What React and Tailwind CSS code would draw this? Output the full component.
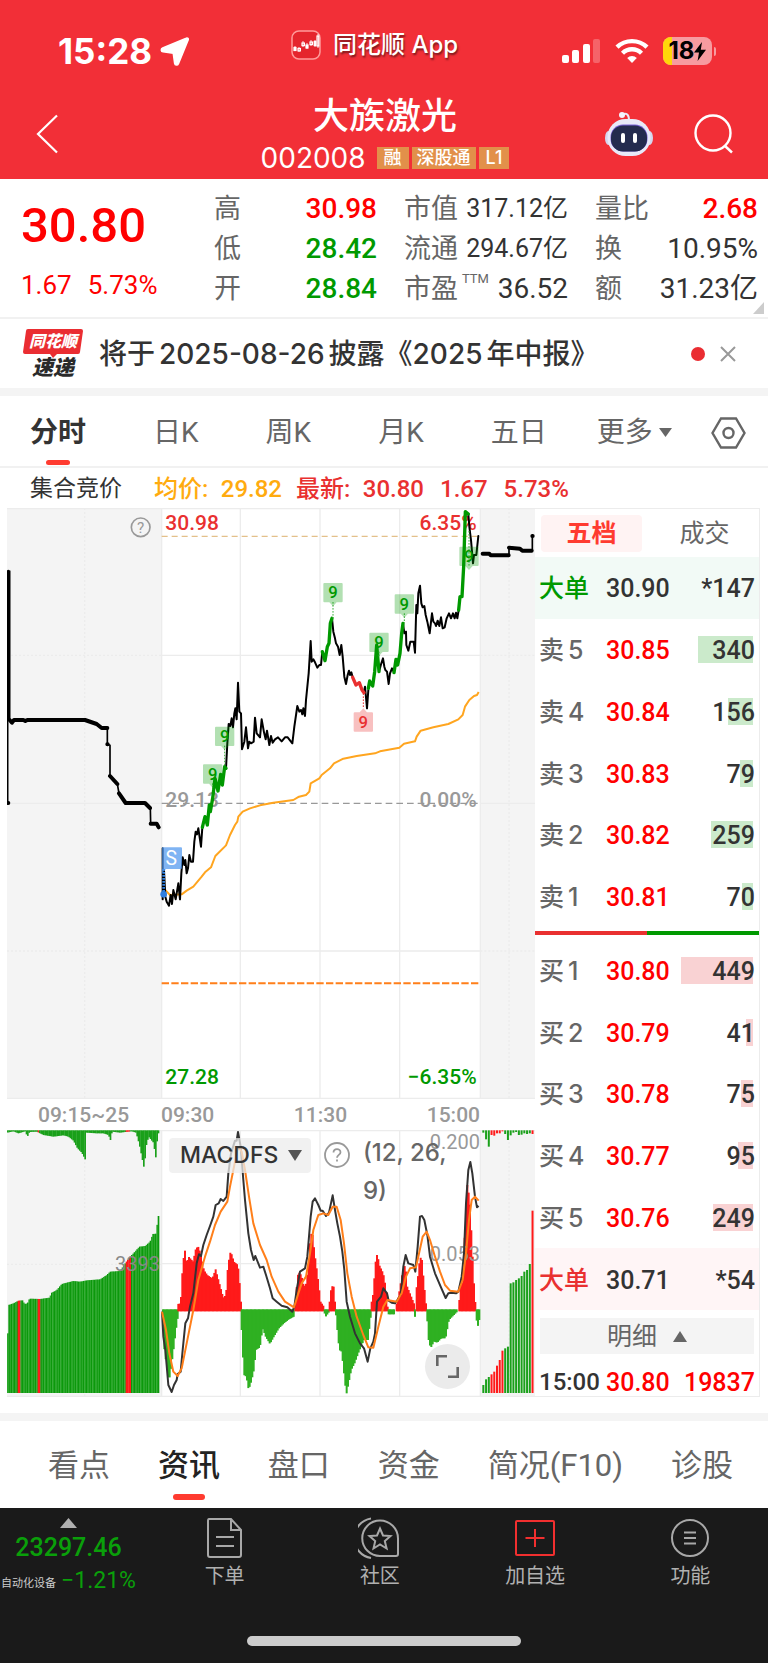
import React from "react";

const NUM = "font-['Roboto','Noto_Sans_CJK_SC',sans-serif]";
const UI = "font-['Inter','Noto_Sans_CJK_SC',sans-serif]";

const QUOTES = [
  [
    { label: "高", value: "30.98", color: "text-[#ff0000] font-medium" },
    { label: "低", value: "28.42", color: "text-[#009900] font-medium" },
    { label: "开", value: "28.84", color: "text-[#009900] font-medium" },
  ],
  [
    { label: "市值", value: "317.12亿", color: "text-[#333]", small: true },
    { label: "流通", value: "294.67亿", color: "text-[#333]", small: true },
    { label: "市盈", sup: "TTM", value: "36.52", color: "text-[#333]" },
  ],
  [
    { label: "量比", value: "2.68", color: "text-[#ff0000] font-medium" },
    { label: "换", value: "10.95%", color: "text-[#333]" },
    { label: "额", value: "31.23亿", color: "text-[#333]" },
  ],
];

const ASKS = [
  ["5", "30.85", 340],
  ["4", "30.84", 156],
  ["3", "30.83", 79],
  ["2", "30.82", 259],
  ["1", "30.81", 70],
];

const BIDS = [
  ["1", "30.80", 449],
  ["2", "30.79", 41],
  ["3", "30.78", 75],
  ["4", "30.77", 95],
  ["5", "30.76", 249],
];

// price line, split where the nine-turn signal recolours it
const PRICE = [
  ["#000", "38,1045 38,1198 42,1110 46,1190 50,1205 57,1217 62,1185 66,1212 70,1170 77,1198 85,1150 90,1198 94,1120 98,1072 103,1095 106,1080 110,1120 114,1105 118,1065 123,1085 129,1085 133,1025 137,995 141,1003 145,985 153,1040 157,982"],
  ["#000", "228,805 232,730 236,672 241,678 245,655 249,682 253,640 256,625 260,658 264,548 268,635 273,640 276,748 283,725 288,682 294,745 298,725 303,730 311,725 315,653 320,700 330,712 335,658 342,697 347,718 351,692 358,735 363,708 368,728 375,718 384,712 395,724 405,712 413,712 427,730 433,680 442,618 448,635 453,630 457,643 460,625 465,648 468,600 476,520 482,423 485,485 490,478 495,487 502,503 508,495 513,495 517,455"],
  ["#000", "546,355 550,395 555,415 558,430 564,440 569,465 574,435 578,470 583,530 588,552 593,525 597,512 600,525 604,517 608,532"],
  ["#000", "642,575 645,560 651,625 655,570"],
  ["#000", "687,515 694,490 699,475 703,500 706,510 711,515 716,552 720,520 726,505 732,518"],
  ["#000", "759,370 763,400 768,395 769,435 775,452 781,425 791,425 795,458 799,315 802,340 805,280 810,257 814,310 818,322 823,318 827,345 832,365 839,400 846,340 850,365 855,370 858,378 863,362 868,378 873,352 878,385 884,382 890,355 897,340 903,355 909,340 914,355 918,338 922,355 926,330"],
  ["#000", "955,42 958,80 963,120 969,190 972,165 979,165 985,108"],
  ["#009900", "157,982 165,950 172,975 178,915 181,935 188,895 195,835 204,873 212,823 217,855 224,800 228,805"],
  ["#009900", "517,455 525,482 532,440 537,430 541,370 546,355"],
  ["#009900", "655,565 659,543 668,558 674,515 680,435 687,515"],
  ["#009900", "732,518 738,478 743,495 750,460 755,400 759,370"],
  ["#009900", "926,330 930,290 936,290 941,200 946,35 955,42"],
  ["#e93030", "608,532 618,555 628,548 636,570 642,578"],
];

const AVERAGE =
  "44,1168 60,1185 95,1183 110,1172 130,1160 155,1130 165,1117 183,1102 196,1068 228,1036 240,1005 255,975 262,965 265,950 278,935 300,925 330,916 370,908 430,900 447,890 468,885 478,875 482,850 508,835 515,825 540,805 552,790 580,776 620,768 675,760 690,754 748,743 762,731 795,724 800,710 812,692 850,682 895,672 925,658 938,645 945,620 958,600 972,588 981,585 986,576";

const MARKERS = [
  [159, 793, 870],
  [195, 680, 800],
  [520, 249, 355],
  [658, 398, 470],
  [734, 283, 370],
  [928, 140, 90],
];

const DIF =
  "36,575 40,650 46,690 55,795 65,816 72,795 80,780 83,762 92,755 98,690 106,610 114,595 120,560 130,520 140,430 147,403 153,408 160,375 170,345 180,318 190,290 197,255 206,250 212,237 220,243 230,230 235,160 243,100 255,62 260,62 264,36 272,80 280,180 285,240 295,340 303,390 311,420 316,408 330,443 340,440 348,465 360,505 368,535 380,545 395,557 412,562 427,575 433,560 440,510 450,455 465,445 472,410 482,290 488,245 495,235 505,255 512,272 518,272 528,288 537,278 548,226 555,270 562,310 570,350 577,395 583,450 590,545 600,590 615,640 630,670 642,685 653,725 661,685 670,665 675,640 681,545 693,530 700,505 711,520 716,542 725,548 735,550 742,540 752,525 760,440 767,405 775,430 790,435 796,455 803,380 810,290 816,288 823,300 832,345 840,410 855,460 872,500 887,534 895,520 905,518 918,520 925,515 935,470 942,400 948,250 955,150 961,126 967,160 975,230 981,262 986,258";

const DEA =
  "36,575 48,630 58,700 70,755 83,768 95,745 110,670 130,570 145,480 165,410 180,365 195,315 212,275 232,245 240,200 250,150 262,90 268,84 275,95 285,150 297,230 310,310 330,375 350,420 365,470 385,515 405,545 432,562 445,520 455,490 468,470 480,400 490,330 505,285 520,280 535,285 548,260 560,260 572,300 582,370 592,460 605,530 620,590 640,645 655,682 670,683 685,620 700,560 712,540 740,545 755,520 768,470 780,445 798,442 806,405 818,350 830,335 840,360 855,410 870,455 885,495 900,512 925,515 938,480 948,400 957,300 965,240 975,230 986,242";

const HIST = [
  [[36, 575], [40, 680], [48, 740], [55, 785], [62, 740], [70, 680], [76, 630], [82, 590]],
  [[82, 552], [90, 550], [92, 512], [97, 425], [103, 392], [108, 430], [114, 410], [128, 425], [134, 390], [142, 378], [150, 400], [160, 450], [170, 465], [185, 475], [195, 448], [205, 485], [218, 533], [226, 525], [232, 435], [240, 393], [250, 425], [262, 435], [268, 500], [271, 545]],
  [[272, 600], [274, 660], [280, 765], [287, 770], [294, 810], [302, 785], [310, 750], [316, 690], [328, 682], [336, 625], [345, 650], [358, 672], [370, 650], [385, 625], [400, 610], [415, 598], [430, 590]],
  [[433, 560], [436, 520], [443, 455], [452, 465], [460, 500], [467, 490], [474, 430], [480, 340], [486, 345], [492, 400], [500, 460], [510, 545], [520, 560]],
  [[521, 575], [524, 592], [534, 578]],
  [[536, 560], [538, 530], [543, 498], [549, 500], [553, 545]],
  [[555, 575], [560, 630], [566, 690], [573, 695], [580, 760], [587, 825], [594, 790], [602, 750], [612, 730], [625, 695], [640, 660], [652, 660], [658, 610], [661, 585]],
  [[662, 550], [668, 520], [674, 430], [680, 400], [686, 435], [698, 460], [706, 505], [711, 560]],
  [[713, 583], [730, 583]],
  [[737, 555], [745, 520], [755, 460], [764, 432], [770, 500], [780, 525], [792, 555]],
  [[792, 590], [796, 592]],
  [[797, 510], [803, 460], [808, 410], [814, 420], [820, 490], [826, 550]],
  [[829, 590], [834, 660], [840, 685], [850, 665], [860, 668], [872, 655], [885, 655], [895, 600], [912, 583], [920, 575]],
  [[925, 550], [930, 500], [937, 480], [941, 390], [944, 280], [950, 195], [957, 235], [963, 350], [970, 490], [975, 560]],
  [[977, 595], [981, 622], [986, 600]],
];

const AUCTION_VOL = [[21, 640], [23, 640], [25, 555], [40, 550], [55, 542], [68, 541], [73, 552], [82, 550], [88, 536], [120, 537], [148, 533], [155, 518], [170, 510], [185, 492], [200, 488], [220, 483], [240, 485], [260, 481], [300, 478], [320, 465], [330, 455], [360, 453], [375, 430], [390, 410], [400, 400], [418, 380], [435, 378], [450, 365], [458, 342], [469, 341], [473, 288], [478, 288]];
const AUCTION_TOP = [[21, 38], [40, 34], [55, 40], [75, 34], [82, 50], [88, 36], [110, 35], [130, 45], [160, 50], [190, 46], [205, 50], [220, 62], [232, 85], [245, 98], [255, 118], [259, 38], [290, 40], [310, 40], [325, 45], [331, 60], [336, 35], [360, 38], [375, 36], [395, 34], [408, 38], [418, 75], [432, 145], [440, 65], [447, 52], [460, 68], [467, 112], [473, 40], [478, 40]];
const CLOSE_VOL = [795, 778, 771, 763, 755, 737, 720, 692, 685, 680, 490, 487, 480, 475, 468, 455, 450, 432, 272];
const CLOSE_TOP = [38, 58, 80, 45, 47, 40, 40, 34, 42, 60, 46, 38, 36, 45, 44, 40, 42, 40, 42];
const CLOSE_RED = [3, 4, 5, 6, 7, 18];

function sample(points, x) {
  for (let i = 1; i < points.length; i++) {
    const [x0, y0] = points[i - 1];
    const [x1, y1] = points[i];
    if (x <= x1) return y0 + ((y1 - y0) * (x - x0)) / (x1 - x0);
  }
  return points[points.length - 1][1];
}

function range(from, to, step) {
  const out = [];
  for (let x = from; x < to; x += step) out.push(x);
  return out;
}

function StatusBar() {
  return (
    <div className="flex items-start h-[88px] pt-[30px] pl-[58px] pr-[52px]">
      <div className="flex items-center gap-2 w-[233px] pt-[3px]">
        <span className="text-[35px] leading-[36px] font-bold">15:28</span>
        <svg width="29" height="29" viewBox="0 0 29 29" fill="#fff">
          <path d="M26.3 1.2c1.3-.6 2.4.5 1.8 1.8L18.400 26.600c-.8 2-3.400 1.800-3.700-.3l-1.400-10L3.100 14.800c-2.200-.3-2.400-2.900-.4-3.700Z" stroke="#fff" strokeWidth="1.600" strokeLinejoin="round" />
        </svg>
      </div>
      <div className="flex items-center gap-3">
        <svg width="30" height="30" viewBox="0 0 30 30">
          <rect x="1" y="1" width="28" height="28" rx="7" fill="#e5252d" stroke="#ff9a9a" strokeWidth="1.500" />
          <g stroke="#fff" strokeWidth="1.200" fill="none">
            <path d="M4 16v5M8 17v5M12 11v6M16 13v6M20 10v6M24 10v7M27 4v14" opacity=".7" />
            <rect x="3" y="17.500" width="2" height="3" fill="#fff" />
            <rect x="7" y="18.500" width="2.400" height="2.400" />
            <rect x="11" y="13" width="2.400" height="2.600" />
            <rect x="15" y="15" width="2" height="3" fill="#fff" />
            <rect x="19" y="12" width="2.400" height="2.600" />
            <rect x="23.200" y="11.500" width="1.600" height="4" fill="#fff" />
            <rect x="26" y="6" width="1.800" height="10" />
          </g>
        </svg>
        <span className="text-[24px] leading-[30px] font-medium [text-shadow:1px_2px_2px_rgba(0,0,0,0.5)]">同花顺 App</span>
      </div>
      <div className="flex items-center ml-auto pt-[7px]">
        <svg className="mr-[14px]" width="40" height="26" viewBox="0 0 40 26" fill="#fff">
          <rect x="1" y="17" width="7" height="8" rx="2" />
          <rect x="11" y="12" width="7" height="13" rx="2" />
          <rect x="22" y="6" width="7" height="19" rx="2" />
          <rect x="32" y="1" width="7" height="24" rx="2" opacity=".25" />
        </svg>
        <svg className="mr-[14px]" width="34" height="26" viewBox="0 0 34 26" fill="none" stroke="#fff" strokeWidth="4.400">
          <path d="M2 9.200a21.500 21.500 0 0 1 30 0" />
          <path d="M7.500 15.200a13.500 13.500 0 0 1 19 0" />
          <path d="M17 25l-4.800-5a6.800 6.800 0 0 1 9.600 0Z" fill="#fff" stroke="none" />
        </svg>
        <div className="flex items-center gap-0.5">
          <div className="relative flex items-center justify-center w-[49px] h-7 rounded-lg overflow-hidden bg-[#f79ba0] text-black">
            <span className="absolute left-0 top-0 h-full w-[9px] bg-[#ffd60a]"></span>
            <span className="relative text-[24px] leading-7 font-bold">18</span>
            <svg className="relative" width="12" height="19" viewBox="0 0 12 19">
              <path d="M8 0 0 10.500h5L3.600 19 12 7.800H6.800Z" />
            </svg>
          </div>
          <span className="w-[2px] h-[9px] rounded-r bg-[#f79ba0]"></span>
        </div>
      </div>
    </div>
  );
}

function Robot() {
  return (
    <svg width="50" height="46" viewBox="0 0 50 46">
      <path d="M18 3.500q7-3 7 6" fill="none" stroke="#e9e9f7" strokeWidth="2" />
      <circle cx="18" cy="4" r="3" fill="#f4f4ff" />
      <ellipse cx="4.500" cy="27" rx="3.500" ry="7" fill="#d5d6ee" />
      <ellipse cx="45.500" cy="27" rx="3.500" ry="7" fill="#d5d6ee" />
      <rect x="3.500" y="8" width="43" height="37" rx="18" fill="#e8e9f8" />
      <rect x="6.500" y="13.500" width="37" height="27" rx="12.500" fill="#7b62d8" />
      <rect x="7" y="14.500" width="36" height="26" rx="12" fill="#242b4e" />
      <rect x="17" y="22" width="4" height="10" rx="2" fill="#fff" />
      <rect x="29" y="22" width="4" height="10" rx="2" fill="#fff" />
    </svg>
  );
}

function Header() {
  return (
    <header className={`${UI} bg-[#f22f37] text-white`}>
      <StatusBar />
      <div className="grid grid-cols-[1fr_auto_1fr] items-center h-[91px] pl-[36px] pr-[34px]">
        <button aria-label="返回" className="justify-self-start">
          <svg width="22" height="40" viewBox="0 0 22 40" fill="none" stroke="#fff" strokeWidth="2.200">
            <path d="M21 1.500 2 20l19 18.500" />
          </svg>
        </button>
        <div className="flex flex-col items-center">
          <h1 className="text-[36px] leading-[48px] font-medium">大族激光</h1>
          <div className="flex items-center gap-[3px]">
            <span className="text-[28px] leading-[36px] mr-2">002008</span>
            <span className="bg-[#e2904a] px-[7px] text-[18px] leading-[22px] font-medium">融</span>
            <span className="bg-[#e2904a] px-[5px] text-[18px] leading-[22px] font-medium">深股通</span>
            <span className="bg-[#e2904a] px-[7px] text-[18px] leading-[22px] font-medium">L1</span>
          </div>
        </div>
        <div className="flex items-center gap-[40px] justify-self-end">
          <button aria-label="智能助手">
            <Robot />
          </button>
          <button aria-label="搜索">
            <svg width="40" height="40" viewBox="0 0 40 40" fill="none" stroke="#fff" strokeWidth="2.400">
              <circle cx="19" cy="19" r="17.500" />
              <path d="m31 32 7 6.500" />
            </svg>
          </button>
        </div>
      </div>
    </header>
  );
}

function Quote() {
  return (
    <section className={`${NUM} relative flex h-[140px] pl-[21px] pr-[10px] pt-2.5 border-b-2 border-[#f1f1f1]`}>
      <div className="w-[193px] text-[#ff0000]">
        <div className="text-[49px] leading-[74px] font-medium">30.80</div>
        <div className="flex gap-4 text-[26px] leading-[44px]">
          <span>1.67</span>
          <span>5.73%</span>
        </div>
      </div>
      <div className="grid grid-cols-[163fr_164fr_163fr] gap-x-[27px] flex-1">
        {QUOTES.map((col, i) => (
          <dl key={i}>
            {col.map((q) => (
              <div key={q.label} className="flex items-center justify-between h-10">
                <dt className="flex text-[27px] leading-10 text-[#666] whitespace-nowrap">
                  {q.label}
                  {q.sup && <sup className="top-0 text-[13px] leading-[20px] ml-1">{q.sup}</sup>}
                </dt>
                <dd className={`${q.color} ${q.small ? "text-[25px]" : "text-[28px]"} leading-10 whitespace-nowrap`}>
                  {q.value}
                </dd>
              </div>
            ))}
          </dl>
        ))}
      </div>
      <svg className="absolute right-1 bottom-[3px]" width="11" height="12" viewBox="0 0 11 12">
        <path d="M11 0v12H0Z" fill="#ccc" />
      </svg>
    </section>
  );
}

function News() {
  return (
    <section className={`${UI} flex items-center h-[77px] pl-[23px] pr-[32px] border-b-8 border-[#f4f4f4]`}>
      <div className="relative flex flex-col items-center w-[60px] italic font-black">
        <svg className="absolute left-0 top-0" width="60" height="30" viewBox="0 0 60 30">
          <path d="M5 1h53q2 0 2 2l-3 21q0 2-2 2H34l-4 4-3-4H2q-2 0-2-2L3 3q0-2 2-2Z" fill="#ea2d32" />
        </svg>
        <span className="relative text-[16px] leading-[27px] text-white">同花顺</span>
        <span className="text-[21px] leading-[25px] text-[#2a2a2a]">速递</span>
      </div>
      <p className="ml-4 text-[28px] leading-[36px] font-medium text-[#333] whitespace-nowrap">
        将于<span className="mx-1">2025-08-26</span>披露《2025<span className="ml-1">年中报》</span>
      </p>
      <span className="ml-auto w-3.5 h-3.5 rounded-full bg-[#ea2d32]"></span>
      <button aria-label="关闭" className="ml-[15px]">
        <svg width="16" height="16" viewBox="0 0 16 16" stroke="#999" strokeWidth="2">
          <path d="m1 1 14 14M15 1 1 15" />
        </svg>
      </button>
    </section>
  );
}

function ChartTabs() {
  return (
    <nav className={`${NUM} flex items-center h-[72px] pt-[3px] pl-[30px] pr-[22px] border-b-2 border-[#f1f1f1] text-[28px] leading-[36px] text-[#666]`}>
      <div className="flex gap-[67px]">
        <button className="relative font-bold text-[#333]">
          分时
          <span className="absolute left-4 -bottom-[14px] w-6 h-[5px] rounded-full bg-[#ff3b30]"></span>
        </button>
        <button>日K</button>
        <button>周K</button>
        <button>月K</button>
        <button>五日</button>
      </div>
      <button className="flex items-center gap-1.5 ml-[50px]">
        更多
        <svg width="13" height="9" viewBox="0 0 13 9">
          <path d="M0 0h13L6.500 9Z" fill="#666" />
        </svg>
      </button>
      <button aria-label="设置" className="ml-auto">
        <svg width="35" height="32" viewBox="0 0 35 32" fill="none" stroke="#666" strokeWidth="2.400">
          <path d="M10 1.500h15L33.500 16 25 30.500H10L1.500 16Z" />
          <circle cx="17.500" cy="16" r="5" />
        </svg>
      </button>
    </nav>
  );
}

function Legend() {
  return (
    <div className={`${NUM} flex items-center h-[40px] pl-[30px] pt-0.5 text-[24px] leading-[36px] font-medium whitespace-nowrap`}>
      <span className="w-[124px] text-[23px] font-normal text-[#333]">集合竞价</span>
      <span className="flex justify-between w-[128px] mr-3.5 text-[#ffab0f]">
        <span>均价:</span>
        <span>29.82</span>
      </span>
      <span className="flex justify-between w-[128px] text-[#e93030]">
        <span>最新:</span>
        <span>30.80</span>
      </span>
      <span className="ml-4 text-[#e93030]">1.67</span>
      <span className="ml-4 text-[#e93030]">5.73%</span>
    </div>
  );
}

function Marker({ x, y, to }) {
  return (
    <g>
      <path d={`M${x + 29} ${y + 57}V${to}`} stroke="#3fb03f" strokeWidth="3" strokeDasharray="5 4" />
      <path
        d={`M${x + 3} ${y}h52q3 0 3 3v52q0 3-3 3h-15l-11 12-11-12h-15q-3 0-3-3v-52q0-3 3-3Z`}
        fill="#009900"
        fillOpacity=".3"
      />
      <text x={x + 29} y={y + 46} textAnchor="middle" fontSize="50" fontWeight="500" fill="#009900">9</text>
    </g>
  );
}

function PriceChart() {
  return (
    <svg className={`${NUM} block w-full`} viewBox="-429 24 1584 1773" role="img" aria-label="分时走势">
      <rect x="-429" y="24" width="464" height="1773" fill="#f4f4f4" />
      <rect x="991" y="24" width="164" height="1773" fill="#f4f4f4" />
      <g stroke="#ececec" strokeWidth="4">
        <path d="M-429 26H1155M-429 1795H1155M35 24V1797M271 24V1797M510 24V1797M749 24V1797M991 24V1797M35 466H991M35 1353H991" />
        <path d="M-196 24V1797M1077 24V1797M-429 466H35M-429 1353H35M991 466H1155M991 1353H1155" strokeDasharray="6 6" />
        <path d="M-429 910H35M991 910H1155" />
      </g>
      <path d="M35 109H991" stroke="#e3c08a" strokeWidth="4" strokeDasharray="18 12" />
      <path d="M35 910H991" stroke="#999" strokeWidth="4" strokeDasharray="20 12" />
      <path d="M35 1450H985" stroke="#ff7f1a" strokeWidth="6" strokeDasharray="22 7" />

      <g fontSize="63" fontWeight="500">
        <text x="46" y="90" fill="#e93030">30.98</text>
        <text x="980" y="90" textAnchor="end" fill="#e93030">6.35%</text>
        <text x="46" y="1752" fill="#009900">27.28</text>
        <text x="980" y="1752" textAnchor="end" fill="#009900">−6.35%</text>
        <text x="46" y="921" fill="#999">29.13</text>
        <text x="980" y="921" textAnchor="end" fill="#999">0.00%</text>
      </g>

      <circle cx="-28" cy="82" r="28" fill="none" stroke="#999" strokeWidth="5" />
      <text x="-28" y="98" textAnchor="middle" fontSize="46" fill="#999">?</text>

      <g fill="none" stroke="#000" strokeLinecap="round" strokeLinejoin="round">
        <g transform="translate(-450 0)">
          <path d="M23 213V910M29 213V658M322 684V733L330 736V828M352 852L357 880M451 925L452 971" strokeWidth="5" />
          <path d="M25 212V655" strokeWidth="6" />
          <path d="M29 660 36 668 42 660H70L76 663 82 660H255L290 672 305 684H322M322 733h1M330 828 352 852M357 880 377 909H435L450 924M452 971H470L476 982M24 909h1" strokeWidth="12" />
        </g>
        <path d="M1077 166V143M1147 152V108" strokeWidth="5" />
        <path d="M998 161H1018L1022 166H1076M1077 143 1110 146 1117 152H1145M1147 108h1" strokeWidth="12" />
      </g>

      <polyline points={AVERAGE} fill="none" stroke="#ffa51f" strokeWidth="6" strokeLinejoin="round" />
      {PRICE.map(([color, points]) => (
        <polyline
          key={points}
          points={points}
          fill="none"
          stroke={color}
          strokeWidth={color === "#000" ? 6 : 10}
          strokeLinejoin="round"
          strokeLinecap="round"
        />
      ))}
      {MARKERS.map(([x, y, to]) => (
        <Marker key={x} x={x} y={y} to={to} />
      ))}

      <path d="M640 580V625" stroke="#e93030" strokeWidth="3" strokeDasharray="5 4" />
      <path d="M614 637h15l11-12 11 12h15q3 0 3 3v52q0 3-3 3h-52q-3 0-3-3v-52q0-3 3-3Z" fill="#e93030" fillOpacity=".3" />
      <text x="640" y="684" textAnchor="middle" fontSize="50" fontWeight="500" fill="#e93030">9</text>

      <path d="M41 1107V1183" stroke="#2f7fe0" strokeWidth="8" strokeDasharray="5 4" />
      <circle cx="41" cy="1183" r="10" fill="#2f7fe0" />
      <path d="M36 1042h57q3 0 3 3v59q0 3-3 3H48l-12 12Z" fill="#4a94ee" fillOpacity=".7" />
      <text x="64" y="1096" textAnchor="middle" fontSize="58" fill="#fff">S</text>
    </svg>
  );
}

function MacdChart() {
  return (
    <svg className={`${NUM} block w-full`} viewBox="-429 30 1584 801" role="img" aria-label="MACDFS">
      <rect x="-429" y="30" width="464" height="801" fill="#f4f4f4" />
      <rect x="991" y="30" width="164" height="801" fill="#f4f4f4" />
      <g stroke="#ececec" strokeWidth="4">
        <path d="M-429 32H1155M-429 829H1155M35 30V831M271 30V831M510 30V831M749 30V831M991 30V831M35 431H991" />
        <path d="M-196 30V831M1077 30V831M-429 433H35M991 433H1155" strokeDasharray="6 6" />
      </g>

      <g transform="translate(-450 0)">
        {range(21, 474, 4).map((x, i) => {
          const red = [53, 57, 113, 117, 377, 381, 385, 389].includes(x);
          const tipRed = [113, 377, 381, 385].includes(x);
          const top = sample(AUCTION_VOL, x + 2);
          return (
            <g key={x}>
              <rect x={x} y={top} width="5" height={819 - top} fill={red ? "#ff1a1a" : i % 2 ? "#0c980c" : "#2ba92b"} />
              <rect x={x} y="31" width="5" height={sample(AUCTION_TOP, x + 2) - 31} fill={tipRed ? "#ff1a1a" : "#1aa01a"} />
            </g>
          );
        })}
      </g>
      {CLOSE_VOL.map((top, i) => (
        <g key={i} fill={CLOSE_RED.includes(i) ? "#ff1a1a" : "#1aa01a"}>
          <rect x={997 + i * 8.2} y={top} width="6" height={819 - top} />
          <rect x={997 + i * 8.2} y="31" width="6" height={CLOSE_TOP[i] - 31} />
        </g>
      ))}

      <g fontSize="60" fill="#999">
        <text x="30" y="454" textAnchor="end" fill="#888">3393</text>
        <text x="990" y="88" textAnchor="end">0.200</text>
      </g>

      {HIST.map((run, r) =>
        range(run[0][0], run[run.length - 1][0], 4).map((x) => {
          const y = sample(run, x + 1);
          const up = y < 571;
          return (
            <rect
              key={`${r}-${x}`}
              x={x}
              y={up ? y : 568}
              width="6"
              height={up ? 574 - y : y - 568}
              fill={up ? "#ff1a1a" : "#2fb022"}
            />
          );
        })
      )}
      <text x="990" y="424" textAnchor="end" fontSize="60" fill="#999">0.053</text>
      <polyline points={DIF} fill="none" stroke="#333" strokeWidth="6" strokeLinejoin="round" />
      <polyline points={DEA} fill="none" stroke="#ff7f1a" strokeWidth="6" strokeLinejoin="round" />
    </svg>
  );
}

function ChartPanel() {
  return (
    <div className="flex-1 min-w-0">
      <PriceChart />
      <div className={`${NUM} grid grid-cols-[154fr_319fr_55fr] h-[31px] text-[21px] leading-[32px] font-medium text-[#999]`}>
        <span className="pl-[31px]">09:15~25</span>
        <div className="flex justify-between">
          <span>09:30</span>
          <span>11:30</span>
          <span>15:00</span>
        </div>
      </div>
      <div className={`${UI} relative`}>
        <MacdChart />
        <div className="absolute left-[162px] top-2 flex items-start">
          <button className="flex items-center gap-2.5 h-[35px] w-[142px] pl-[11px] rounded bg-[#ececec]/75 text-[23px] font-medium text-[#333]">
            MACDFS
            <svg width="14" height="11" viewBox="0 0 14 11">
              <path d="M0 0h14L7 11Z" fill="#555" />
            </svg>
          </button>
          <button aria-label="指标说明" className="ml-[13px] mt-1">
            <svg width="26" height="26" viewBox="0 0 26 26" fill="none" stroke="#999" strokeWidth="1.800">
              <circle cx="13" cy="13" r="12" />
              <path d="M9.500 10.500c0-4.500 7-4.500 7-.3 0 2.500-3.500 2.800-3.500 5.500M13 17.600v2" />
            </svg>
          </button>
          <p className="ml-[13px] -mt-1 w-[92px] text-[24px] leading-[38px] font-medium text-[#666]">(12, 26, 9)</p>
        </div>
        <button aria-label="全屏" className="absolute right-[65px] bottom-2 flex items-center justify-center w-[45px] h-[45px] rounded-full bg-[#ebebeb]">
          <svg width="23" height="23" viewBox="0 0 23 23" fill="none" stroke="#666" strokeWidth="2.600">
            <path d="M1.300 11V1.300H11M12 21.700h9.700V12" />
          </svg>
        </button>
      </div>
    </div>
  );
}

function BookRow({ side, level, price, volume, bar }) {
  return (
    <div className="flex flex-1 items-center pl-1 pr-1 pt-0.5">
      <span className={`${UI} w-[67px] flex gap-1 font-medium text-[#666]`}>
        <span>{side}</span>
        <span>{level}</span>
      </span>
      <span className="text-[#ff0000]">{price}</span>
      <span className="relative flex-1 text-right text-[#333]">
        <span
          className={`absolute right-[2px] top-[2px] h-[27px] ${bar}`}
          style={{ width: Math.round(volume * 0.161) }}
        ></span>
        <span className="relative">{volume}</span>
      </span>
    </div>
  );
}

function BigOrder({ price, volume, tone }) {
  return (
    <div className={`flex flex-1 items-center pl-1 pr-1 pt-0.5 ${tone}`}>
      <span className="w-[67px]">大单</span>
      <span className="text-[#333]">{price}</span>
      <span className="flex-1 text-right text-[#333]">{volume}</span>
    </div>
  );
}

function OrderBook() {
  return (
    <aside className={`${NUM} flex flex-col w-[225px] shrink-0 border-y border-r border-[#ececec] text-[25px] leading-[33px] font-medium`}>
      <div className="flex items-center h-[48px] pl-[6px]">
        <button className="w-[101px] h-[37px] rounded bg-[#fff3f3] font-bold text-[#ff3b30]">五档</button>
        <button className="flex-1 pl-2 font-normal text-[#666]">成交</button>
      </div>
      <BigOrder price="30.90" volume="*147" tone="bg-[#f2faf6] text-[#009900]" />
      {ASKS.map(([level, price, volume]) => (
        <BookRow key={level} side="卖" level={level} price={price} volume={volume} bar="bg-[#cbeacb]" />
      ))}
      <div className="flex h-1 mt-[3px] mb-[5px]">
        <span className="flex-1 bg-[#e93030]"></span>
        <span className="flex-1 bg-[#009900]"></span>
      </div>
      {BIDS.map(([level, price, volume]) => (
        <BookRow key={level} side="买" level={level} price={price} volume={volume} bar="bg-[#f9d2d3]" />
      ))}
      <BigOrder price="30.71" volume="*54" tone="bg-[#fff5f6] text-[#e93030]" />
      <button className="flex items-center justify-center gap-4 h-9 mt-2 mx-[5px] bg-[#f4f4f4] font-normal text-[#666]">
        明细
        <svg width="14" height="11" viewBox="0 0 14 11">
          <path d="M0 11h14L7 0Z" fill="#666" />
        </svg>
      </button>
      <div className="flex items-center h-[42px] pl-1 pr-1 pt-3.5">
        <span className="w-[67px] text-[24px] text-[#333]">15:00</span>
        <span className="text-[#ff0000]">30.80</span>
        <span className="flex-1 text-right text-[#ff0000]">19837</span>
      </div>
    </aside>
  );
}

function InfoTabs() {
  return (
    <nav className={`${NUM} flex items-center justify-between h-[87px] pl-12 pr-[35px] pt-0.5 text-[31px] leading-[40px] text-[#666]`}>
      <button>看点</button>
      <button className="relative font-medium text-[#222]">
        资讯
        <span className="absolute left-[15px] -bottom-3.5 w-8 h-[6px] rounded-full bg-[#ff3b30]"></span>
      </button>
      <button>盘口</button>
      <button>资金</button>
      <button>简况(F10)</button>
      <button>诊股</button>
    </nav>
  );
}

function NavItem({ label, children }) {
  return (
    <button className="flex flex-1 flex-col items-center pt-[9px] text-[20px] leading-[28px] text-[#b0b0b0]">
      <svg width="44" height="42" viewBox="0 0 44 42" fill="none" stroke="#a8a8a8" strokeWidth="2">
        {children}
      </svg>
      <span className="mt-[3px]">{label}</span>
    </button>
  );
}

function BottomNav() {
  return (
    <footer className={`${NUM} bg-[#1a1a1a] h-[155px] flex flex-col justify-between items-center pb-[17px]`}>
      <div className="flex w-full">
        <a href="#index" className="flex flex-col items-center w-[147px] pr-[10px] pt-2.5 text-[#0a9f0a]">
          <svg width="17" height="10" viewBox="0 0 17 10">
            <path d="M0 10h17L8.500 0Z" fill="#b0b0b0" />
          </svg>
          <span className="mt-1 text-[25px] leading-[32px] font-medium">23297.46</span>
          <span className="flex items-center gap-[5px] whitespace-nowrap">
            <span className="text-[11px] leading-[28px] pt-1.5 text-[#ccc]">自动化设备</span>
            <span className="text-[23px] leading-[28px]">−1.21%</span>
          </span>
        </a>
        <NavItem label="下单">
          <path d="M6 2h22l10 11v25q0 2-2 2H7q-2 0-2-2V4q0-2 1-2ZM28 2v11h10M13 20h18M13 29h18" />
        </NavItem>
        <NavItem label="社区">
          <path d="M22 3.500a18 18 0 0 1 18 18V37q0 2-2 2H22a17.700 17.700 0 0 1 0-35.500ZM13 1.500A20 20 0 0 0 13 41" />
          <path d="m22 11.500 3 7 7.500.6-5.700 5 1.800 7.400-6.600-4-6.500 4 1.700-7.400-5.700-5 7.500-.6Z" />
        </NavItem>
        <NavItem label="加自选">
          <g stroke="#f22f2f">
            <rect x="3" y="4" width="38" height="34" rx="1" />
            <path d="M12.500 21h19M22 12v18" />
          </g>
        </NavItem>
        <NavItem label="功能">
          <circle cx="22" cy="21" r="18" />
          <path d="M16 15.500h12M16 21h12M16 26.500h12" />
        </NavItem>
      </div>
      <span className="w-[274px] h-[10px] rounded-full bg-[#ccc]"></span>
    </footer>
  );
}

export default function App() {
  return (
    <div className="bg-white">
      <Header />
      <Quote />
      <News />
      <ChartTabs />
      <Legend />
      <main className="flex pl-[7px] pr-2 pb-4">
        <ChartPanel />
        <OrderBook />
      </main>
      <div className="h-2 bg-[#f4f4f4]"></div>
      <InfoTabs />
      <BottomNav />
    </div>
  );
}
